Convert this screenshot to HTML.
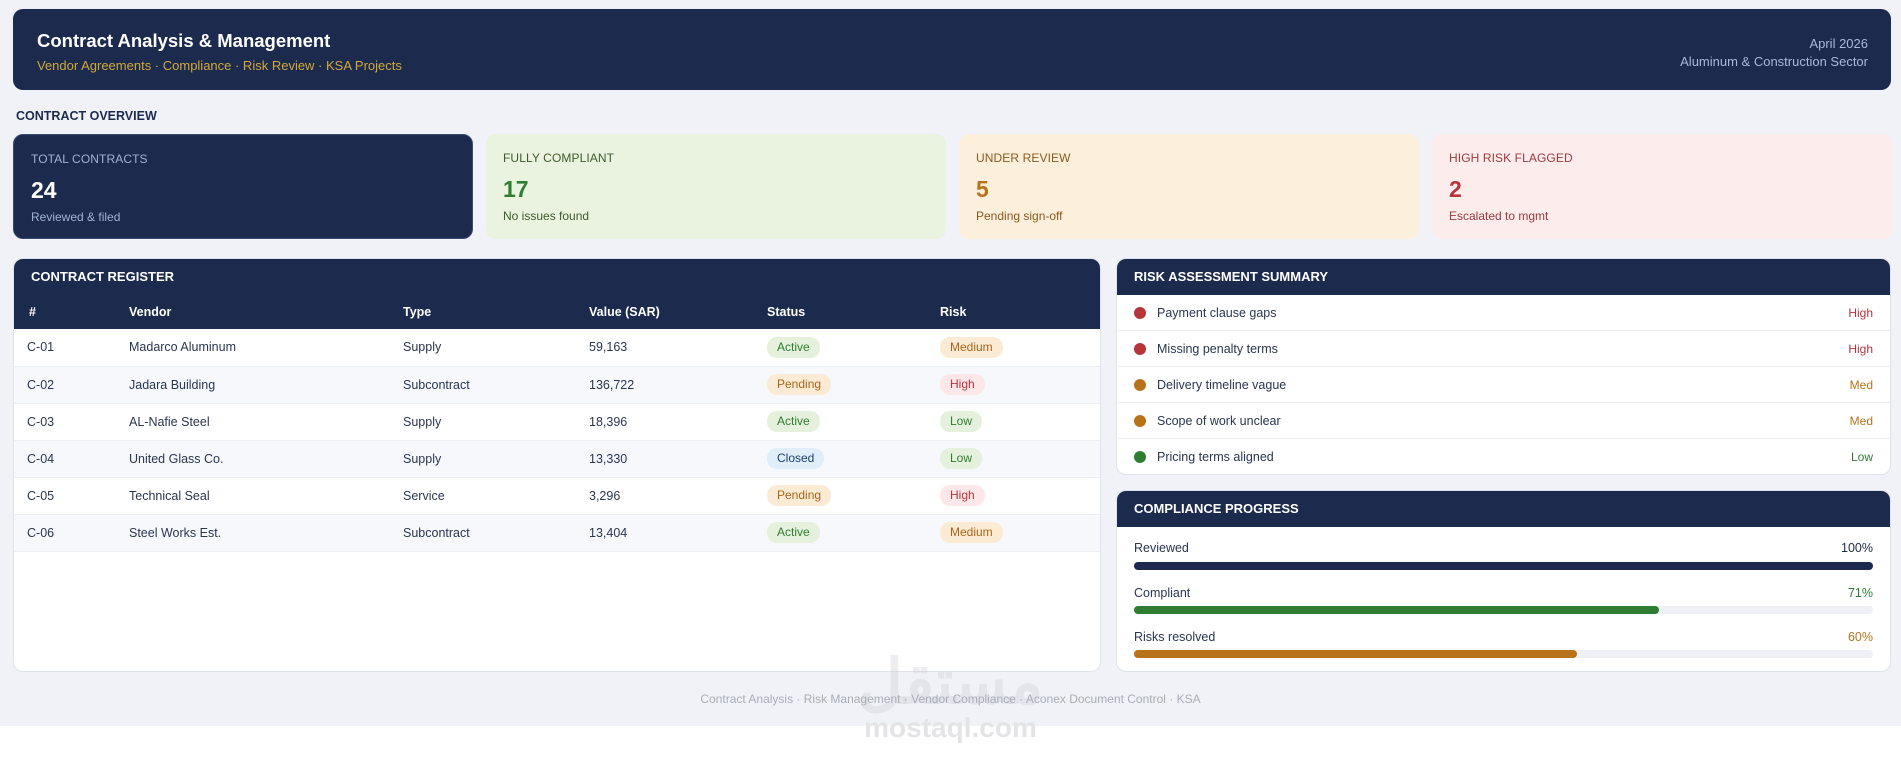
<!DOCTYPE html>
<html><head><meta charset="utf-8"><style>
*{box-sizing:border-box;margin:0;padding:0}
body{width:1901px;height:762px;background:#fff;font-family:"Liberation Sans",sans-serif;position:relative;overflow:hidden;color:#1c2a4d}
.bg{position:absolute;left:0;top:0;width:1901px;height:726px;background:#f0f2f7}
.abs{position:absolute}
.hdr{left:13px;top:9px;width:1878px;height:81px;background:#1c2a4d;border-radius:10px}
.card{top:134px;width:460px;height:105px;border-radius:10px;padding:0 17px}
.card .l{position:absolute;top:17px;font-size:12px;letter-spacing:.1px}
.card .n{position:absolute;top:42px;font-size:23px;font-weight:bold}
.card .s{position:absolute;top:75px;font-size:12px}
.panel{background:#fff;border-radius:10px;border:1px solid #dfe3ec;overflow:hidden}
.ph{background:#1c2a4d;color:#fff;font-weight:bold;font-size:13px;padding-left:17px}
table{border-collapse:collapse;width:100%;font-size:12.5px}
td,th{text-align:left;padding:0;height:37px}
th{color:#fff;font-weight:bold;height:34px}
tr.r td{border-bottom:1px solid #eceff5}
tr.alt{background:#f6f8fc}
.b{display:inline-block;padding:0 10px;height:21px;line-height:21px;border-radius:10px;font-size:12px}
.ga{background:#e5f1dc;color:#2e7d32}.pe{background:#fcebd4;color:#a8651a}.hi{background:#fde7e8;color:#b5353a}.cl{background:#e0eef9;color:#1c3f6e}
.rr{height:36px;border-bottom:1px solid #eceff5;display:flex;align-items:center;padding:0 17px 0 17px;font-size:12.5px;color:#2a3550}
.rr .d{width:12px;height:12px;border-radius:50%;margin-right:11px}
.rr .v{margin-left:auto;font-size:12px}
.pl{position:absolute;left:17px;right:17px;font-size:12.5px;color:#2a3550}
.pl span{float:right}
.bar{position:absolute;left:17px;right:17px;height:8px;border-radius:4px;background:#eef0f5}
.bar i{display:block;height:8px;border-radius:4px}
</style></head><body>
<div class="bg"></div>
<div class="abs hdr">
 <div class="abs" style="left:24px;top:21px;color:#fff;font-size:18.5px;font-weight:bold">Contract Analysis &amp; Management</div>
 <div class="abs" style="left:24px;top:49px;color:#d2a83a;font-size:13px">Vendor Agreements · Compliance · Risk Review · KSA Projects</div>
 <div class="abs" style="right:23px;top:26px;color:#a9b9d9;font-size:13px;text-align:right;line-height:18px">April 2026<br>Aluminum &amp; Construction Sector</div>
</div>
<div class="abs" style="left:16px;top:109px;font-size:12.5px;font-weight:bold;color:#1c2a4d">CONTRACT OVERVIEW</div>

<div class="abs card" style="left:13px;background:#1c2a4d;border:1px solid #3a4a70">
 <div class="l" style="color:#9fb2d6">TOTAL CONTRACTS</div><div class="n" style="color:#fff">24</div><div class="s" style="color:#9fb2d6">Reviewed &amp; filed</div></div>
<div class="abs card" style="left:486px;background:#eaf3df">
 <div class="l" style="color:#3e5a2e">FULLY COMPLIANT</div><div class="n" style="color:#2e7d32">17</div><div class="s" style="color:#3e5a2e">No issues found</div></div>
<div class="abs card" style="left:959px;background:#fcefdc">
 <div class="l" style="color:#8a5a1e">UNDER REVIEW</div><div class="n" style="color:#b8731a">5</div><div class="s" style="color:#8a5a1e">Pending sign-off</div></div>
<div class="abs card" style="left:1432px;background:#fdecec">
 <div class="l" style="color:#9a3a3e">HIGH RISK FLAGGED</div><div class="n" style="color:#b5353a">2</div><div class="s" style="color:#9a3a3e">Escalated to mgmt</div></div>

<div class="abs panel" style="left:13px;top:258px;width:1088px;height:414px">
 <div class="ph" style="height:36px;line-height:36px">CONTRACT REGISTER</div>
 <table style="color:#2a3550">
  <colgroup><col style="width:115px"><col style="width:274px"><col style="width:186px"><col style="width:178px"><col style="width:173px"><col></colgroup>
  <tr style="background:#1c2a4d"><th style="padding-left:15px">#</th><th>Vendor</th><th>Type</th><th>Value (SAR)</th><th>Status</th><th>Risk</th></tr>
  <tr class="r"><td style="padding-left:13px">C-01</td><td>Madarco Aluminum</td><td>Supply</td><td>59,163</td><td><span class="b ga">Active</span></td><td><span class="b pe">Medium</span></td></tr>
  <tr class="r alt"><td style="padding-left:13px">C-02</td><td>Jadara Building</td><td>Subcontract</td><td>136,722</td><td><span class="b pe">Pending</span></td><td><span class="b hi">High</span></td></tr>
  <tr class="r"><td style="padding-left:13px">C-03</td><td>AL-Nafie Steel</td><td>Supply</td><td>18,396</td><td><span class="b ga">Active</span></td><td><span class="b ga">Low</span></td></tr>
  <tr class="r alt"><td style="padding-left:13px">C-04</td><td>United Glass Co.</td><td>Supply</td><td>13,330</td><td><span class="b cl">Closed</span></td><td><span class="b ga">Low</span></td></tr>
  <tr class="r"><td style="padding-left:13px">C-05</td><td>Technical Seal</td><td>Service</td><td>3,296</td><td><span class="b pe">Pending</span></td><td><span class="b hi">High</span></td></tr>
  <tr class="r alt"><td style="padding-left:13px">C-06</td><td>Steel Works Est.</td><td>Subcontract</td><td>13,404</td><td><span class="b ga">Active</span></td><td><span class="b pe">Medium</span></td></tr>
 </table>
</div>

<div class="abs panel" style="left:1116px;top:258px;width:775px;height:217px">
 <div class="ph" style="height:36px;line-height:36px">RISK ASSESSMENT SUMMARY</div>
 <div class="rr"><i class="d" style="background:#b5353a"></i>Payment clause gaps<span class="v" style="color:#b5353a">High</span></div>
 <div class="rr"><i class="d" style="background:#b5353a"></i>Missing penalty terms<span class="v" style="color:#b5353a">High</span></div>
 <div class="rr"><i class="d" style="background:#b8731a"></i>Delivery timeline vague<span class="v" style="color:#b8731a">Med</span></div>
 <div class="rr"><i class="d" style="background:#b8731a"></i>Scope of work unclear<span class="v" style="color:#b8731a">Med</span></div>
 <div class="rr" style="border:0"><i class="d" style="background:#2e7d32"></i>Pricing terms aligned<span class="v" style="color:#2e7d32">Low</span></div>
</div>

<div class="abs panel" style="left:1116px;top:490px;width:775px;height:182px">
 <div class="ph" style="height:36px;line-height:36px">COMPLIANCE PROGRESS</div>
 <div class="pl" style="top:50px">Reviewed<span style="color:#1c2a4d">100%</span></div>
 <div class="bar" style="top:71px"><i style="width:100%;background:#1c2a4d"></i></div>
 <div class="pl" style="top:95px">Compliant<span style="color:#2e7d32">71%</span></div>
 <div class="bar" style="top:115px"><i style="width:71%;background:#2e7d32"></i></div>
 <div class="pl" style="top:139px">Risks resolved<span style="color:#b8731a">60%</span></div>
 <div class="bar" style="top:159px"><i style="width:60%;background:#b8731a"></i></div>
</div>

<div class="abs" style="left:0;width:1901px;top:645px;text-align:center;font-family:'Liberation Sans','Noto Sans CJK SC',sans-serif;font-size:62px;font-weight:bold;color:rgba(200,200,205,.3)">مستقل</div>
<div class="abs" style="left:0;width:1901px;top:692px;text-align:center;font-size:12px;color:#a8adb8">Contract Analysis · Risk Management · Vendor Compliance · Aconex Document Control · KSA</div>
<div class="abs" style="left:0;width:1901px;top:712px;text-align:center;font-size:28px;font-weight:bold;color:#e4e4e6">mostaql.com</div>
</body></html>
